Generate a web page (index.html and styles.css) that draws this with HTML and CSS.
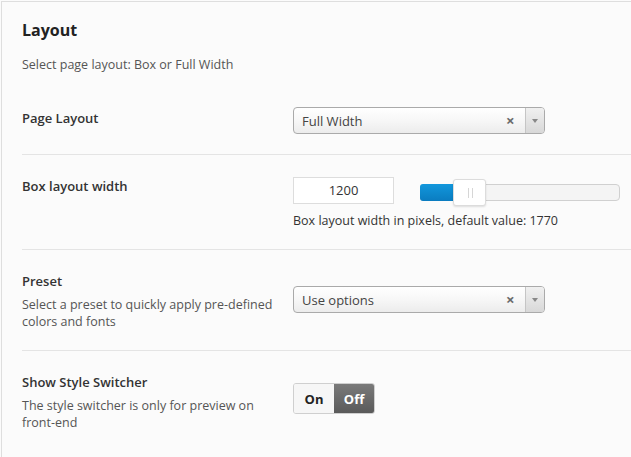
FILE: index.html
```html
<!DOCTYPE html>
<html>
<head>
<meta charset="utf-8">
<link rel="stylesheet" href="styles.css">
</head>
<body>
<div class="panel">
  <div class="head">
    <h2 class="title">Layout</h2>
    <p class="subtitle">Select page layout: Box or Full Width</p>
  </div>

  <div class="row row-first">
    <div class="info">
      <div class="label">Page Layout</div>
    </div>
    <div class="control ctl-a">
      <div class="select">
        <span class="select-text">Full Width</span>
        <span class="select-clear">×</span>
        <span class="select-arrow"><span class="tri"></span></span>
      </div>
    </div>
  </div>

  <div class="row">
    <div class="info">
      <div class="label">Box layout width</div>
    </div>
    <div class="control ctl-b">
      <div class="slider-line">
        <div class="num">1200</div>
        <div class="track">
          <div class="fill" style="width:34px"></div>
          <div class="handle" style="left:32px"><span class="grip"></span></div>
        </div>
      </div>
      <div class="help">Box layout width in pixels, default value: 1770</div>
    </div>
  </div>

  <div class="row">
    <div class="info">
      <div class="label">Preset</div>
      <div class="desc">Select a preset to quickly apply pre-defined colors and fonts</div>
    </div>
    <div class="control ctl-c">
      <div class="select">
        <span class="select-text">Use options</span>
        <span class="select-clear">×</span>
        <span class="select-arrow"><span class="tri"></span></span>
      </div>
    </div>
  </div>

  <div class="row row-last">
    <div class="info">
      <div class="label">Show Style Switcher</div>
      <div class="desc">The style switcher is only for preview on front-end</div>
    </div>
    <div class="control ctl-d">
      <div class="toggle">
        <span class="tg tg-on">On</span>
        <span class="tg tg-off">Off</span>
      </div>
    </div>
  </div>
</div>
</body>
</html>
```

FILE: styles.css
```css
html, body {
  margin: 0;
  padding: 0;
  background: #fbfbfb;
}
body {
  font-family: "Open Sans", "Noto Sans", sans-serif;
  color: #333;
  width: 631px;
  height: 457px;
  overflow: hidden;
}
.panel {
  margin: 1px 0 0 1px;
  border-top: 1px solid #dedede;
  border-left: 1px solid #dedede;
  height: 460px;
  padding-left: 20px;
  box-sizing: border-box;
}
.title {
  margin: 0;
  padding-top: 17px;
  font-size: 16px;
  font-weight: 700;
  line-height: 22px;
  color: #222;
}
.subtitle {
  margin: 16px 0 0;
  font-size: 12.5px;
  line-height: 16px;
  color: #555;
}
.row {
  display: flex;
  border-bottom: 1px solid #e4e4e4;
  padding: 22px 0 20px;
}
.row-first {
  margin-top: 14px;
  padding-top: 22px;
}
.row-last {
  border-bottom: none;
}
.info {
  width: 271px;
  flex: none;
}
.label {
  font-size: 13px;
  font-weight: 600;
  line-height: 18px;
  color: #333;
}
.desc {
  margin-top: 6px;
  font-size: 12.5px;
  line-height: 17px;
  color: #555;
  width: 262px;
}
.control {
  flex: none;
}
.ctl-a { margin-top: -2px; }
.ctl-b { margin-top: 0; }
.ctl-c { margin-top: 14px; }
.ctl-d { margin-top: 10px; }

.select {
  width: 252px;
  height: 27px;
  box-sizing: border-box;
  border: 1px solid #aaa;
  border-radius: 4px;
  background: linear-gradient(#ffffff 0%, #f7f7f7 50%, #ececec 100%);
  display: flex;
  align-items: center;
  position: relative;
}
.select-text {
  flex: 1;
  padding-left: 8px;
  font-size: 13px;
  color: #444;
}
.select-clear {
  width: 14px;
  font-size: 15px;
  font-weight: 700;
  color: #6a6a6a;
  line-height: 1;
  margin-right: 5px;
}
.select-arrow {
  width: 18px;
  align-self: stretch;
  border-left: 1px solid #c5c5c5;
  border-radius: 0 3px 3px 0;
  background: linear-gradient(#f0f0f0, #d8d8d8);
  display: flex;
  align-items: center;
  justify-content: center;
}
.tri {
  width: 0;
  height: 0;
  border-left: 3px solid transparent;
  border-right: 3px solid transparent;
  border-top: 4px solid #888;
}

.slider-line {
  display: flex;
  align-items: center;
}
.num {
  width: 101px;
  height: 27px;
  box-sizing: border-box;
  border: 1px solid #ddd;
  background: #fff;
  text-align: center;
  font-size: 13px;
  line-height: 25px;
  color: #333;
}
.track {
  position: relative;
  margin-left: 26px;
  margin-top: 3px;
  width: 200px;
  height: 17px;
  box-sizing: border-box;
  border: 1px solid #d0d0d0;
  border-radius: 4px;
  background: #f4f4f4;
}
.fill {
  border-radius: 3px 0 0 3px;
  background: linear-gradient(#1297dc, #0a7cc0);
  margin: -1px 0 0 -1px;
  height: 17px;
}
.handle {
  position: absolute;
  top: -6px;
  width: 33px;
  height: 27px;
  box-sizing: border-box;
  background: #fff;
  border: 1px solid #dcdcdc;
  border-radius: 3px;
  box-shadow: 0 1px 2px rgba(0,0,0,0.12);
}
.grip {
  position: absolute;
  left: 14px;
  top: 8px;
  width: 3px;
  height: 10px;
  border-left: 1px solid #d6d6d6;
  border-right: 1px solid #d6d6d6;
}
.help {
  margin-top: 8px;
  font-size: 12.5px;
  line-height: 17px;
  color: #333;
}

.toggle {
  display: flex;
  width: 82px;
  height: 31px;
  box-sizing: border-box;
  border: 1px solid #cfcfcf;
  border-radius: 3px;
  overflow: hidden;
}
.tg {
  display: flex;
  align-items: center;
  justify-content: center;
  font-size: 13px;
  font-weight: 700;
}
.tg-on {
  width: 40px;
  background: #f6f6f6;
  color: #222;
}
.tg-off {
  flex: 1;
  background: linear-gradient(#7a7a7a, #5a5a5a);
  color: #fff;
}
```
